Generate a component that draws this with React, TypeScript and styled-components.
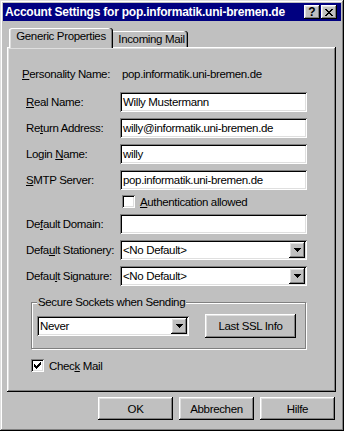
import React from "react";
import styled, { createGlobalStyle } from "styled-components";

const Global = createGlobalStyle`
  html, body { margin: 0; padding: 0; background: #c0c0c0; }
  body {
    font-family: "Liberation Sans", Arial, sans-serif;
    font-size: 11.5px;
    letter-spacing: -0.35px;
    color: #000;
  }
  * { box-sizing: border-box; }
`;

const raised = `box-shadow: inset -1px -1px #000, inset 1px 1px #fff, inset -2px -2px #808080, inset 2px 2px #dfdfdf;`;
const sunken = `box-shadow: inset 1px 1px #808080, inset -1px -1px #fff, inset 2px 2px #000, inset -2px -2px #dfdfdf;`;

const Window = styled.div`
  width: 344px;
  height: 431px;
  background: #c0c0c0;
  box-shadow: inset -1px -1px #000, inset 1px 1px #dfdfdf, inset -2px -2px #808080, inset 2px 2px #fff;
  padding: 3px;
  display: flex;
  flex-direction: column;
`;

const TitleBar = styled.div`
  height: 18px;
  background: #000080;
  color: #fff;
  display: flex;
  align-items: center;
  padding: 0 4px 0 2px;
  font-weight: bold;
  font-size: 12px;
  letter-spacing: -0.22px;
`;

const TitleText = styled.span`
  flex: 1;
  white-space: nowrap;
`;

const TitleButtons = styled.div`
  display: flex;
  gap: 1px;
`;

const TitleButton = styled.div`
  width: 16px;
  height: 14px;
  background: #c0c0c0;
  ${raised}
  display: flex;
  align-items: center;
  justify-content: center;
  color: #000;
  font-weight: bold;
  font-size: 12px;
  line-height: 1;
  letter-spacing: 0;
`;

const Body = styled.div`
  padding: 7px 5px 0 4px;
  display: flex;
  flex-direction: column;
`;

const TabStrip = styled.div`
  display: flex;
  align-items: flex-end;
  height: 19px;
  padding-left: 2px;
`;

const Tab = styled.div<{ $active?: boolean }>`
  position: relative;
  z-index: ${(p) => (p.$active ? 2 : 1)};
  height: ${(p) => (p.$active ? "20px" : "16px")};
  margin-bottom: ${(p) => (p.$active ? "-1px" : "0")};
  margin-right: ${(p) => (p.$active ? "-2px" : "0")};
  width: ${(p) => (p.$active ? "104px" : "77px")};
  background: #c0c0c0;
  border-radius: 3px 3px 0 0;
  box-shadow: inset -1px 0 #000, inset -2px 0 #808080, inset 1px 0 #fff, inset 0 1px #fff, inset 2px 0 #dfdfdf;
  display: flex;
  align-items: ${(p) => (p.$active ? "flex-start" : "center")};
  padding-top: ${(p) => (p.$active ? "2px" : "0")};
  padding-left: ${(p) => (p.$active ? "0" : "4px")};
  justify-content: center;
  white-space: nowrap;
`;

const Panel = styled.div`
  height: 345px;
  background: #c0c0c0;
  ${raised}
  display: flex;
  flex-direction: column;
  padding: 14px 0 0 19px;
`;

const Form = styled.div`
  display: grid;
  grid-template-columns: 94px 187px;
  row-gap: 6px;
  align-items: center;
`;

const Label = styled.div<{ $shift?: number }>`
  white-space: nowrap;
  margin-left: ${(p) => p.$shift ?? 0}px;
`;

const StaticValue = styled.div`
  height: 25px;
  display: flex;
  align-items: center;
  padding-left: 2px;
  white-space: nowrap;
`;

const TextField = styled.div`
  height: 20px;
  background: #fff;
  ${sunken}
  display: flex;
  align-items: center;
  padding: 0 3px;
  white-space: nowrap;
  overflow: hidden;
`;

const Combo = styled.div<{ $w?: number }>`
  height: 20px;
  width: ${(p) => (p.$w ? `${p.$w}px` : "auto")};
  background: #fff;
  ${sunken}
  display: flex;
  align-items: center;
  padding: 2px 2px 2px 3px;
  white-space: nowrap;
`;

const ComboText = styled.span`
  flex: 1;
`;

const DropButton = styled.div`
  width: 16px;
  height: 16px;
  background: #c0c0c0;
  ${raised}
  display: flex;
  align-items: center;
  justify-content: center;
`;

const CheckRow = styled.div<{ $ml?: number; $mt?: number }>`
  display: flex;
  align-items: center;
  height: 13px;
  gap: 5px;
  margin-left: ${(p) => p.$ml ?? 0}px;
  margin-top: ${(p) => p.$mt ?? 0}px;
  white-space: nowrap;
`;

const CheckBox = styled.div`
  width: 13px;
  height: 13px;
  background: #fff;
  ${sunken}
  display: flex;
  align-items: center;
  justify-content: center;
`;

const Group = styled.div`
  position: relative;
  margin: 16px 0 0 5px;
  width: 275px;
  height: 47px;
  border: 1px solid #808080;
  box-shadow: 1px 1px #fff, inset 1px 1px #fff;
  display: flex;
  align-items: center;
  padding-left: 5px;
  gap: 16px;
`;

const Legend = styled.span`
  position: absolute;
  top: -8px;
  left: 5px;
  padding: 0 1px;
  line-height: 14px;
  background: #c0c0c0;
  white-space: nowrap;
`;

const PushButton = styled.div<{ $w: number; $h?: number }>`
  width: ${(p) => p.$w}px;
  height: ${(p) => p.$h ?? 23}px;
  background: #c0c0c0;
  ${raised}
  display: flex;
  align-items: center;
  justify-content: center;
  white-space: nowrap;
`;

const ButtonRow = styled.div`
  display: flex;
  justify-content: flex-end;
  gap: 6px;
  margin-top: 5px;
  padding-right: 1px;
`;

const CheckMailRow = styled.div`
  margin: 10px 0 0 5px;
`;

const Arrow = () => (
  <svg width="7" height="4" viewBox="0 0 7 4" shapeRendering="crispEdges">
    <path d="M0 0h7v1H0zM1 1h5v1H1zM2 2h3v1H2zM3 3h1v1H3z" fill="#000" />
  </svg>
);

const Check = () => (
  <svg width="7" height="7" viewBox="0 0 7 7" shapeRendering="crispEdges">
    <path
      d="M6 0h1v3H6zM5 1h1v3H5zM4 2h1v3H4zM0 2h1v3H0zM1 3h1v3H1zM2 4h1v3H2zM3 3h1v3H3z"
      fill="#000"
    />
  </svg>
);

const CloseGlyph = () => (
  <svg width="8" height="7" viewBox="0 0 8 7" shapeRendering="crispEdges">
    <path
      d="M0 0h2v1H0zM6 0h2v1H6zM1 1h2v1H1zM5 1h2v1H5zM2 2h4v1H2zM3 3h2v1H3zM2 4h4v1H2zM1 5h2v1H1zM5 5h2v1H5zM0 6h2v1H0zM6 6h2v1H6z"
      fill="#000"
    />
  </svg>
);

const Field = ({ children }: { children?: React.ReactNode }) => <TextField>{children}</TextField>;

const ComboBox = ({ value, w }: { value: string; w?: number }) => (
  <Combo $w={w}>
    <ComboText>{value}</ComboText>
    <DropButton>
      <Arrow />
    </DropButton>
  </Combo>
);

export default function App() {
  return (
    <>
      <Global />
      <Window>
        <TitleBar>
          <TitleText>Account Settings for pop.informatik.uni-bremen.de</TitleText>
          <TitleButtons>
            <TitleButton>?</TitleButton>
            <TitleButton>
              <CloseGlyph />
            </TitleButton>
          </TitleButtons>
        </TitleBar>
        <Body>
          <TabStrip>
            <Tab $active>Generic Properties</Tab>
            <Tab>Incoming Mail</Tab>
          </TabStrip>
          <Panel>
            <Form>
              <Label $shift={-4}>
                <u>P</u>ersonality Name:
              </Label>
              <StaticValue>pop.informatik.uni-bremen.de</StaticValue>

              <Label>
                <u>R</u>eal Name:
              </Label>
              <Field>Willy Mustermann</Field>

              <Label>
                Re<u>t</u>urn Address:
              </Label>
              <Field>willy@informatik.uni-bremen.de</Field>

              <Label>
                Login <u>N</u>ame:
              </Label>
              <Field>willy</Field>

              <Label>
                <u>S</u>MTP Server:
              </Label>
              <Field>pop.informatik.uni-bremen.de</Field>

              <div />
              <CheckRow $ml={2} $mt={-1}>
                <CheckBox />
                <span>
                  <u>A</u>uthentication allowed
                </span>
              </CheckRow>

              <Label>
                De<u>f</u>ault Domain:
              </Label>
              <Field />

              <Label>
                Defa<u>u</u>lt Stationery:
              </Label>
              <ComboBox value="<No Default>" />

              <Label>
                Defau<u>l</u>t Signature:
              </Label>
              <ComboBox value="<No Default>" />
            </Form>

            <Group>
              <Legend>Secure Sockets when Sending</Legend>
              <ComboBox value="Never" w={152} />
              <PushButton $w={91} $h={24}>
                Last SSL Info
              </PushButton>
            </Group>

            <CheckMailRow>
              <CheckRow>
                <CheckBox>
                  <Check />
                </CheckBox>
                <span>
                  Chec<u>k</u> Mail
                </span>
              </CheckRow>
            </CheckMailRow>
          </Panel>
          <ButtonRow>
            <PushButton $w={75}>OK</PushButton>
            <PushButton $w={75}>Abbrechen</PushButton>
            <PushButton $w={75}>Hilfe</PushButton>
          </ButtonRow>
        </Body>
      </Window>
    </>
  );
}
